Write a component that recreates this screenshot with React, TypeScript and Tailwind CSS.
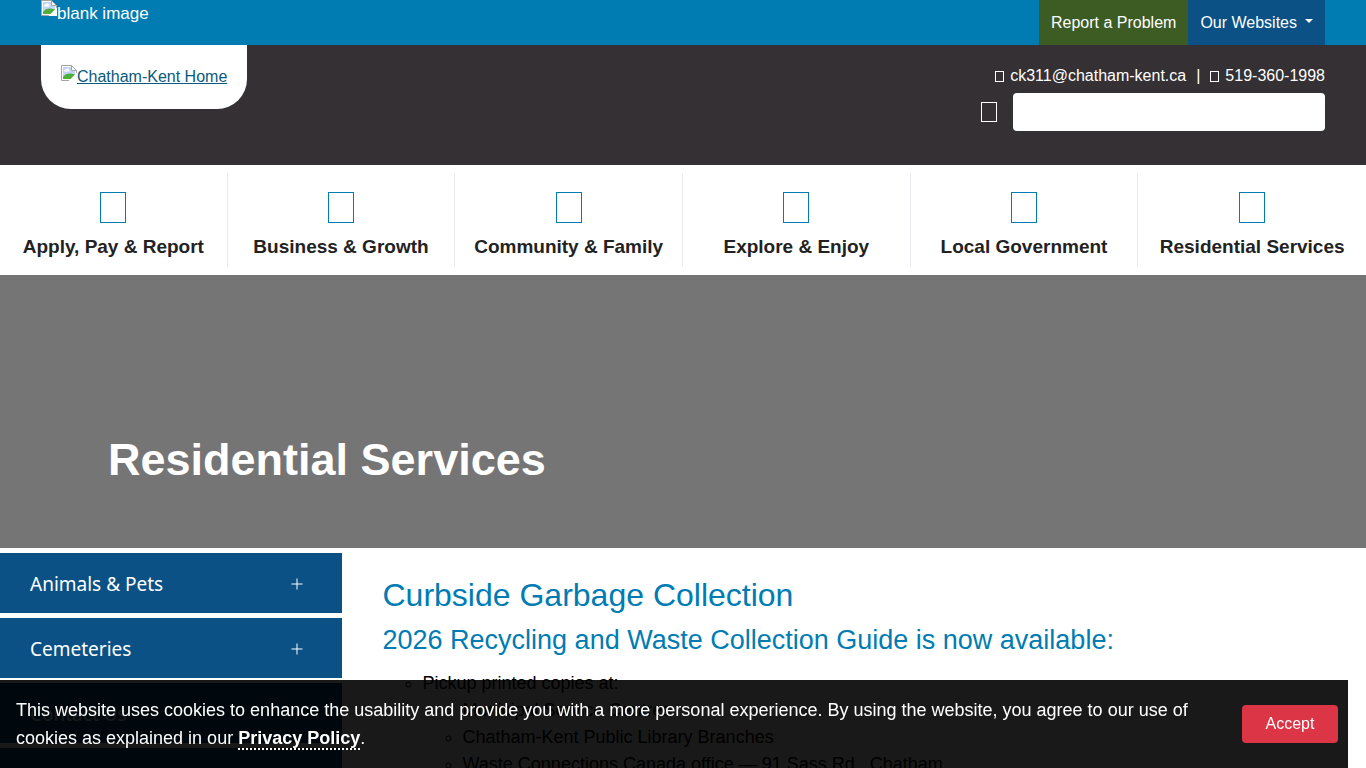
import type { ReactNode } from "react"

const navItems = [
  "Apply, Pay & Report",
  "Business & Growth",
  "Community & Family",
  "Explore & Enjoy",
  "Local Government",
  "Residential Services",
]

const sideItems = ["Animals & Pets", "Cemeteries", "Contact Us", "Garbage & Recycling"]

const pickupPlaces = [
  "Municipal Service Centres",
  "Chatham-Kent Public Library Branches",
  "Waste Connections Canada office — 91 Sass Rd., Chatham",
]

function BrokenImage() {
  return (
    <svg className="h-4 w-4 shrink-0" viewBox="0 0 16 16" aria-hidden="true">
      <path d="M0.5 0.5h10l5 5v10h-15z" fill="#fff" stroke="#a3a3a3" />
      <path d="M2 2h8v4h4v8H2z" fill="#c3d5f5" />
      <path d="M3 6.5a1.5 1.5 0 0 1 1.5-2A2 2 0 0 1 8 6.5z" fill="#fff" />
      <path d="M2 14v-2c2-3 5-4 8-3.5l4 1V14z" fill="#4faf3c" />
      <path d="M10.5 0.5v5h5z" fill="#fff" stroke="#a3a3a3" />
      <path d="M16 7.5V16H7.5z" fill="#fff" />
    </svg>
  )
}

function MissingGlyph({ className }: { className: string }) {
  return <span aria-hidden="true" className={`inline-block border ${className}`} />
}

function ContactLink({ href, children }: { href: string; children: ReactNode }) {
  return (
    <a href={href} className="flex items-center gap-1.5">
      <MissingGlyph className="h-[11px] w-[9px] border-white" />
      <span>{children}</span>
    </a>
  )
}

export default function App() {
  return (
    <div className="h-screen overflow-hidden bg-white font-['Liberation_Sans',Arial,sans-serif] text-base text-black">
      {/* Top bar */}
      <div className="bg-[#007cb3] px-[41px] text-white">
        <div className="flex justify-between">
          <div role="img" aria-label="blank image" className="flex items-start text-[17px] leading-7">
            <BrokenImage />
            <span>blank image</span>
          </div>
          <div className="flex h-[45px]">
            <a href="#" className="flex items-center bg-[#3c5c24] px-3">
              Report a Problem
            </a>
            <button type="button" className="flex items-center gap-2 bg-[#0b5186] px-3">
              Our Websites
              <svg className="mb-1 h-1 w-2" viewBox="0 0 8 4" aria-hidden="true">
                <path d="M0 0h8L4 4z" fill="currentColor" />
              </svg>
            </button>
          </div>
        </div>
      </div>

      {/* Header */}
      <header className="flex h-[120px] items-start justify-between bg-[#343034] px-[41px] text-white">
        <a
          href="#"
          className="flex h-16 items-start rounded-b-[30px] bg-white px-5 pt-5 text-[#0a5a7d]"
        >
          <BrokenImage />
          <span className="underline">Chatham-Kent Home</span>
        </a>
        <div className="flex flex-col items-end pt-[19px]">
          <div className="flex items-center">
            <ContactLink href="mailto:ck311@chatham-kent.ca">ck311@chatham-kent.ca</ContactLink>
            <span className="px-[10px]">|</span>
            <ContactLink href="tel:519-360-1998">519-360-1998</ContactLink>
          </div>
          <div className="mt-[5px] flex items-center gap-4">
            <button type="button" aria-label="Search" className="flex">
              <MissingGlyph className="h-5 w-4 border-white" />
            </button>
            <input
              type="text"
              aria-label="Search the site"
              className="h-[38px] w-[312px] rounded bg-white px-3 text-black"
            />
          </div>
        </div>
      </header>

      {/* Main navigation */}
      <nav className="grid h-[110px] grid-cols-6 py-2">
        {navItems.map((item) => (
          <a
            key={item}
            href="#"
            className="flex flex-col items-center border-r border-[#e9ecef] pt-[19px] text-[19px] font-bold text-[#222] last:border-r-0"
          >
            <MissingGlyph className="h-[31px] w-[26px] border-[#007cb3]" />
            <span className="mt-2 leading-8 whitespace-nowrap">{item}</span>
          </a>
        ))}
      </nav>

      {/* Banner */}
      <section className="flex h-[273px] items-end bg-[#757575] px-[108px] pb-[61px]">
        <h1 className="text-[45px] leading-[54px] font-bold text-white">Residential Services</h1>
      </section>

      <div className="flex">
        <aside className="w-1/4 shrink-0">
          {sideItems.map((item) => (
            <button
              key={item}
              type="button"
              className="mt-[5px] flex h-[60px] w-full items-center justify-between bg-[#0b5186] pt-0.5 pr-[39px] pl-[30px] font-['Noto_Sans',sans-serif] text-[19px] text-white"
            >
              <span>{item}</span>
              <svg className="h-3 w-3" viewBox="0 0 12 12" aria-hidden="true">
                <path d="M6 0.5v11M0.5 6h11" stroke="currentColor" />
              </svg>
            </button>
          ))}
        </aside>

        <main className="flex-1 px-[41px] pt-7">
          <h2 className="text-[32px] leading-[38px] text-[#007cb3]">Curbside Garbage Collection</h2>
          <h3 className="mt-2 text-[27px] leading-9 text-[#007cb3]">
            2026 Recycling and Waste Collection Guide is now available:
          </h3>
          <ul className="mt-3 list-[circle] pl-10 text-lg leading-[27px]">
            <li>
              Pickup printed copies at:
              <ul className="list-[circle] pl-10">
                {pickupPlaces.map((place) => (
                  <li key={place}>{place}</li>
                ))}
              </ul>
            </li>
          </ul>
        </main>
      </div>

      {/* Cookie notice */}
      <div className="fixed bottom-0 left-0 flex w-[calc(100%-18px)] items-start justify-between bg-black/90 pt-4 pr-2.5 pb-4 pl-4 text-white">
        <p className="text-lg leading-7">
          This website uses cookies to enhance the usability and provide you with a more personal experience. By using
          the website, you agree to our use of cookies as explained in our{" "}
          <a href="#" className="font-bold underline decoration-dotted decoration-2 underline-offset-4">
            Privacy Policy
          </a>
          .
        </p>
        <button type="button" className="mt-[9px] h-[38px] w-24 shrink-0 rounded bg-[#dc3545]">
          Accept
        </button>
      </div>
    </div>
  )
}
